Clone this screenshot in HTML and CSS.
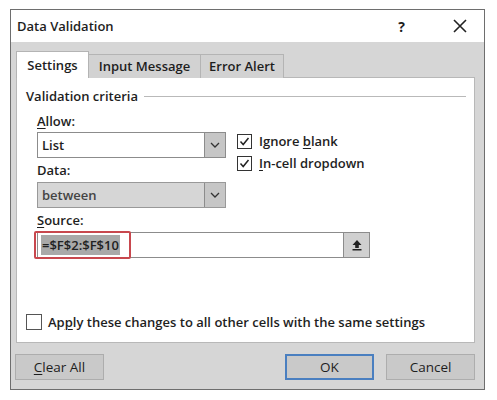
FILE: index.html
```html
<!DOCTYPE html>
<html lang="en">
    <head>
        <meta charset="UTF-8">
        <title>Data Validation</title>
        <link rel="stylesheet" href="styles.css">
    </head>
    <body>
        <div class="dialog">
            <div class="titlebar">
                <span class="title">Data Validation</span>
                <span class="help">?</span>
                <svg class="close" width="16" height="16" viewBox="0 0 16 16">
                    <path d="M2 2 L14 14 M14 2 L2 14" stroke="#222" stroke-width="1.6" fill="none"/>
                </svg>
            </div>
            <div class="body">
                <div class="tabs">
                    <div class="tab active">Settings</div>
                    <div class="tab">Input Message</div>
                    <div class="tab">Error Alert</div>
                </div>
                <div class="panel">
                    <div class="legend">
                        <span>Validation criteria</span>
                        <span class="rule"></span>
                    </div>
                    <div class="criteria">
                        <div class="fields">
                            <div class="label first"><u>A</u>llow:</div>
                            <div class="select">
                                <span class="value">List</span>
                                <span class="drop">
                                    <svg width="10" height="6" viewBox="0 0 10 6"><path d="M1 1 L5 5 L9 1" stroke="#333" stroke-width="1.3" fill="none"/></svg>
                                </span>
                            </div>
                            <div class="label">Data:</div>
                            <div class="select disabled">
                                <span class="value">between</span>
                                <span class="drop">
                                    <svg width="10" height="6" viewBox="0 0 10 6"><path d="M1 1 L5 5 L9 1" stroke="#333" stroke-width="1.3" fill="none"/></svg>
                                </span>
                            </div>
                        </div>
                        <div class="checks">
                            <div class="check">
                                <span class="box">
                                    <svg width="13" height="13" viewBox="0 0 13 13"><path d="M2.5 6.5 L5.2 9.5 L10.5 3" stroke="#222" stroke-width="1.5" fill="none"/></svg>
                                </span>
                                <span>Ignore <u>b</u>lank</span>
                            </div>
                            <div class="check">
                                <span class="box">
                                    <svg width="13" height="13" viewBox="0 0 13 13"><path d="M2.5 6.5 L5.2 9.5 L10.5 3" stroke="#222" stroke-width="1.5" fill="none"/></svg>
                                </span>
                                <span><u>I</u>n-cell dropdown</span>
                            </div>
                        </div>
                    </div>
                    <div class="label source_label"><u>S</u>ource:</div>
                    <div class="source">
                        <span class="formula"><span class="selected">=$F$2:$F$10</span></span>
                        <span class="collapse">
                            <svg width="12" height="12" viewBox="0 0 12 12"><path d="M6 1 L1.5 6 H4.2 V9 H7.8 V6 H10.5 Z" fill="#222"/><rect x="1.5" y="10" width="9" height="1.5" fill="#222"/></svg>
                        </span>
                        <span class="highlight"></span>
                    </div>
                    <div class="check apply">
                        <span class="box big"></span>
                        <span>Ap<u>p</u>ly these changes to all other cells with the same settings</span>
                    </div>
                </div>
                <div class="buttons">
                    <div class="button"><u>C</u>lear All</div>
                    <div class="spacer"></div>
                    <div class="button default">OK</div>
                    <div class="button">Cancel</div>
                </div>
            </div>
        </div>
    </body>
</html>
```

FILE: styles.css
```css
body {
    margin: 0px;
    padding: 9px 0px 0px 10px;
    background: #ffffff;
    color: #1e1e1e;
    font-family: "Open Sans", "Noto Sans", sans-serif;
    font-size: 13px;
    font-weight: 600;
}

u { text-decoration-thickness: 1px; text-underline-offset: 2px; }

.dialog {
    width: 475px;   height: 381px;
    box-sizing: border-box;
    border: 1px solid #6e6e6e;
    display: flex;
    flex-direction: column;
}

.titlebar {
    height: 32px;
    background: #ffffff;
    display: flex;
    align-items: center;
    padding: 0px 0px 0px 6px;
}
.title { flex: 1; font-size: 13px; }
.help { font-size: 14px; font-weight: 700; margin-right: 47px; }
.close { margin-right: 16px; }

.body {
    flex: 1;
    background: #d6d6d6;
    padding: 9px 9px 0px 5px;
    display: flex;
    flex-direction: column;
}

.tabs {
    display: flex;
    align-items: flex-end;
    height: 27px;
    position: relative;
    z-index: 1;
}
.tab {
    height: 24px;
    box-sizing: border-box;
    border: 1px solid #b4b4b4;
    border-bottom: none;
    background: #d2d2d2;
    line-height: 23px;
    margin-left: -1px;
    text-align: center;
    white-space: nowrap;
}
.tab.active {
    height: 27px;
    background: #ffffff;
    line-height: 27px;
    margin-left: 0px;
    width: 73px;
}
.tab:nth-child(2) { width: 113px; }
.tab:nth-child(3) { width: 84px; }

.panel {
    height: 266px;
    box-sizing: border-box;
    margin-top: -1px;
    background: #ffffff;
    border: 1px solid #b8b8b8;
    padding: 9px 8px 11px 9px;
    display: flex;
    flex-direction: column;
}

.legend {
    display: flex;
    align-items: center;
    height: 18px;
    gap: 6px;
}
.rule { flex: 1; height: 1px; background: #b9b9b9; }

.criteria {
    display: flex;
    gap: 11px;
    padding-left: 11px;
    margin-top: 5px;
}
.fields { width: 189px; display: flex; flex-direction: column; }

.label { height: 24px; line-height: 24px; }
.label.first { height: 22px; line-height: 22px; }

.select {
    height: 26px;
    box-sizing: border-box;
    border: 1px solid #8c8c8c;
    background: #ffffff;
    display: flex;
}
.select.disabled { background: #d6d6d6; border-color: #999999; }
.value { flex: 1; line-height: 24px; padding-left: 4px; }
.select.disabled .value { color: #444444; }
.drop {
    width: 20px;
    background: #c6c6c6;
    border-left: 1px solid #8c8c8c;
    display: flex;
    align-items: center;
    justify-content: center;
}

.checks { padding-top: 20px; display: flex; flex-direction: column; }
.check { display: flex; align-items: center; gap: 7px; height: 22px; }
.box {
    width: 13px;    height: 13px;
    border: 1px solid #333333;
    display: flex;
    background: #ffffff;
}
.box.big { width: 14px; height: 14px; border-color: #555555; }

.source_label { padding-left: 11px; }
.source {
    margin-left: 11px;
    width: 333px;   height: 26px;
    box-sizing: border-box;
    border: 1px solid #8c8c8c;
    display: flex;
    position: relative;
}
.formula { flex: 1; padding-left: 3px; line-height: 24px; }
.selected { background: #a9a9a9; color: #222222; padding: 1px 1px; }
.collapse {
    width: 25px;
    background: #d0d0d0;
    border-left: 1px solid #8c8c8c;
    display: flex;
    align-items: center;
    justify-content: center;
}
.highlight {
    position: absolute;
    left: -4px;     top: -2px;
    width: 93px;    height: 24px;
    border: 2px solid #c8484e;
    border-radius: 2px;
}

.apply { margin-top: auto; height: 18px; gap: 6px; }

.buttons {
    display: flex;
    gap: 12px;
    margin-top: 11px;
    padding-left: 0px;
    margin-left: -1px;
}
.spacer { flex: 1; }
.button {
    width: 89px;    height: 26px;
    box-sizing: border-box;
    border: 1px solid #adadad;
    background: #c9c9c9;
    text-align: center;
    line-height: 24px;
    font-weight: 400;
    font-size: 13.5px;
}
.button.default { border: 2px solid #4a7fc0; line-height: 22px; }
```
